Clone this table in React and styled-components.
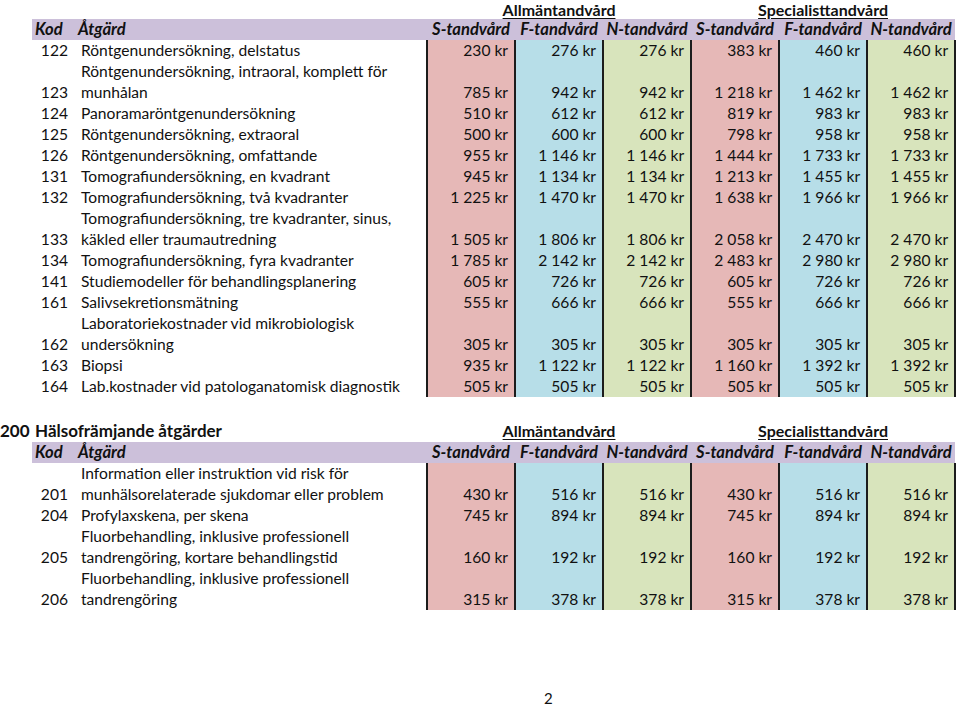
import React from "react";
import styled, { createGlobalStyle } from "styled-components";

const GlobalStyle = createGlobalStyle`
  html, body {
    margin: 0;
    padding: 0;
    background: #ffffff;
  }
`;

// Colours of the price columns, as in the printed price list
const COLS = ["#e6b8b7", "#b7dee8", "#d8e4bc", "#e6b8b7", "#b7dee8", "#d8e4bc"];
const SUB = ["S-tandvård", "F-tandvård", "N-tandvård", "S-tandvård", "F-tandvård", "N-tandvård"];

const Page = styled.div`
  width: 960px;
  height: 708px;
  display: flex;
  flex-direction: column;
  font-family: Lato, "Open Sans", "Liberation Sans", sans-serif;
  font-size: 15.6px;
  color: #111;
  overflow: hidden;
`;

const Table = styled.table`
  width: 955px;
  table-layout: fixed;
  border-collapse: collapse;
  margin-top: ${(p) => p.$top || 0}px;
`;

const GroupRow = styled.tr`
  height: ${(p) => p.$h}px;
`;

const GroupCell = styled.td`
  padding: 0;
  text-align: center;
  font-weight: 700;
  font-size: 16px;
  text-decoration: underline;
  text-underline-offset: 2px;
  line-height: ${(p) => p.$h}px;
  vertical-align: bottom;
`;

const SectionCode = styled.td`
  padding: 0;
  font-weight: 700;
  font-size: 17px;
  line-height: 22px;
  vertical-align: bottom;
`;

const SectionTitle = styled.td`
  padding: 0 0 0 3px;
  font-weight: 700;
  font-size: 17px;
  line-height: 22px;
  vertical-align: bottom;
  white-space: nowrap;
`;

const HeadRow = styled.tr`
  height: 21px;
`;

const HeadCell = styled.th`
  padding: 0 0 0 ${(p) => (p.$left ? 3 : 0)}px;
  background: ${(p) => (p.$blank ? "transparent" : "#ccc0da")};
  font-weight: 700;
  font-style: italic;
  font-size: 16.6px;
  text-align: ${(p) => (p.$left ? "left" : "center")};
  line-height: 21px;
  white-space: nowrap;
`;

const CodeCell = styled.td`
  padding: 0 7px 0 0;
  text-align: right;
  vertical-align: bottom;
  line-height: 21px;
`;

const TextCell = styled.td`
  padding: 0 0 0 6px;
  text-align: left;
  vertical-align: bottom;
  line-height: 21px;
  white-space: nowrap;
`;

const PriceCell = styled.td`
  padding: 0 6px 0 0;
  background: ${(p) => p.$bg};
  border-left: 2px solid #1c1c1c;
  border-right: 2px solid #1c1c1c;
  text-align: right;
  vertical-align: bottom;
  line-height: 21px;
  white-space: nowrap;
`;

const PageNo = styled.div`
  margin-top: auto;
  padding: 0 0 2px 544px;
  line-height: 16px;
  font-size: 15px;
`;

const radiology = [
  ["122", ["Röntgenundersökning, delstatus"], [230, 276, 276, 383, 460, 460]],
  ["123", ["Röntgenundersökning, intraoral, komplett för", "munhålan"], [785, 942, 942, 1218, 1462, 1462]],
  ["124", ["Panoramaröntgenundersökning"], [510, 612, 612, 819, 983, 983]],
  ["125", ["Röntgenundersökning, extraoral"], [500, 600, 600, 798, 958, 958]],
  ["126", ["Röntgenundersökning, omfattande"], [955, 1146, 1146, 1444, 1733, 1733]],
  ["131", ["Tomografiundersökning, en kvadrant"], [945, 1134, 1134, 1213, 1455, 1455]],
  ["132", ["Tomografiundersökning, två kvadranter"], [1225, 1470, 1470, 1638, 1966, 1966]],
  ["133", ["Tomografiundersökning, tre kvadranter, sinus,", "käkled eller traumautredning"], [1505, 1806, 1806, 2058, 2470, 2470]],
  ["134", ["Tomografiundersökning, fyra kvadranter"], [1785, 2142, 2142, 2483, 2980, 2980]],
  ["141", ["Studiemodeller för behandlingsplanering"], [605, 726, 726, 605, 726, 726]],
  ["161", ["Salivsekretionsmätning"], [555, 666, 666, 555, 666, 666]],
  ["162", ["Laboratoriekostnader vid mikrobiologisk", "undersökning"], [305, 305, 305, 305, 305, 305]],
  ["163", ["Biopsi"], [935, 1122, 1122, 1160, 1392, 1392]],
  ["164", ["Lab.kostnader vid patologanatomisk diagnostik"], [505, 505, 505, 505, 505, 505]],
];

const health = [
  ["201", ["Information eller instruktion vid risk för", "munhälsorelaterade sjukdomar eller problem"], [430, 516, 516, 430, 516, 516]],
  ["204", ["Profylaxskena, per skena"], [745, 894, 894, 745, 894, 894]],
  ["205", ["Fluorbehandling, inklusive professionell", "tandrengöring, kortare behandlingstid"], [160, 192, 192, 160, 192, 192]],
  ["206", ["Fluorbehandling, inklusive professionell", "tandrengöring"], [315, 378, 378, 315, 378, 378]],
];

const kr = (n) => n.toLocaleString("sv-SE").replace(/\s/g, "\u00a0") + "\u00a0kr";

function Cols() {
  return (
    <colgroup>
      <col style={{ width: 32 }} />
      <col style={{ width: 43 }} />
      <col style={{ width: 352 }} />
      {COLS.map((_, i) => (
        <col key={i} style={{ width: 88 }} />
      ))}
    </colgroup>
  );
}

function HeaderRow() {
  return (
    <HeadRow>
      <HeadCell $blank />
      <HeadCell $left>Kod</HeadCell>
      <HeadCell $left>Åtgärd</HeadCell>
      {SUB.map((s, i) => (
        <HeadCell key={i}>{s}</HeadCell>
      ))}
    </HeadRow>
  );
}

function Rows({ data }) {
  return data.map(([code, lines, prices]) => (
    <tr key={code}>
      <td />
      <CodeCell>{code}</CodeCell>
      <TextCell>
        {lines.map((l, i) => (
          <React.Fragment key={i}>
            {i > 0 && <br />}
            {l}
          </React.Fragment>
        ))}
      </TextCell>
      {prices.map((p, i) => (
        <PriceCell key={i} $bg={COLS[i]}>
          {kr(p)}
        </PriceCell>
      ))}
    </tr>
  ));
}

export default function App() {
  return (
    <Page>
      <GlobalStyle />
      <Table>
        <Cols />
        <tbody>
          <GroupRow $h={19}>
            <td colSpan={3} />
            <GroupCell colSpan={3} $h={19}>Allmäntandvård</GroupCell>
            <GroupCell colSpan={3} $h={19}>Specialisttandvård</GroupCell>
          </GroupRow>
          <HeaderRow />
          <Rows data={radiology} />
        </tbody>
      </Table>
      <Table $top={23}>
        <Cols />
        <tbody>
          <GroupRow $h={22}>
            <SectionCode>200</SectionCode>
            <SectionTitle colSpan={2}>Hälsofrämjande åtgärder</SectionTitle>
            <GroupCell colSpan={3} $h={22}>Allmäntandvård</GroupCell>
            <GroupCell colSpan={3} $h={22}>Specialisttandvård</GroupCell>
          </GroupRow>
          <HeaderRow />
          <Rows data={health} />
        </tbody>
      </Table>
      <PageNo>2</PageNo>
    </Page>
  );
}
